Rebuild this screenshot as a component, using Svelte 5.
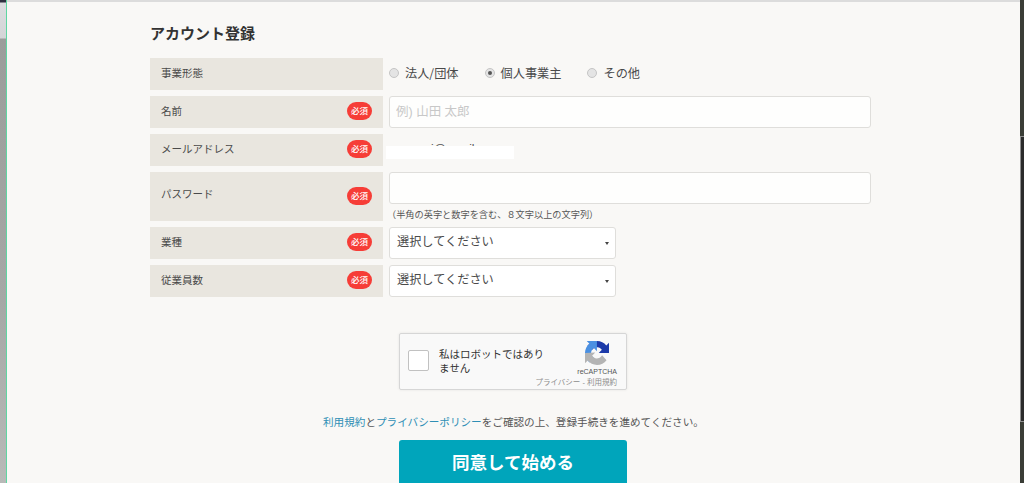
<script>
  const bizTypes = ['法人/団体', '個人事業主', 'その他'];
  let bizType = $state('個人事業主');
  let agreeRobot = $state(false);
</script>

<div class="frame">
  <div class="side"></div>
  <main class="page">
    <form class="form" onsubmit={(e) => e.preventDefault()}>
      <h1>アカウント登録</h1>

      <div class="row">
        <div class="label">事業形態</div>
        <div class="radios">
          {#each bizTypes as item}
            <button type="button" class="radio" onclick={() => (bizType = item)}>
              <span class="dot" class:on={bizType === item}></span>{item}
            </button>
          {/each}
        </div>
      </div>

      <div class="row">
        <div class="label">名前<span class="req">必須</span></div>
        <input class="text" type="text" placeholder="例) 山田 太郎" />
      </div>

      <div class="row">
        <div class="label">メールアドレス<span class="req">必須</span></div>
        <div class="email">
          <span class="email-text">i@gmail</span>
          <span class="mask"></span>
        </div>
      </div>

      <div class="row tall">
        <div class="label">パスワード<span class="req">必須</span></div>
        <div class="field">
          <input class="text" type="password" />
          <p class="hint">（半角の英字と数字を含む、８文字以上の文字列）</p>
        </div>
      </div>

      <div class="row">
        <div class="label">業種<span class="req">必須</span></div>
        <div class="select">選択してください<span class="caret"></span></div>
      </div>

      <div class="row">
        <div class="label">従業員数<span class="req">必須</span></div>
        <div class="select">選択してください<span class="caret"></span></div>
      </div>

      <div class="captcha">
        <button type="button" class="check" class:on={agreeRobot} aria-label="robot" onclick={() => (agreeRobot = !agreeRobot)}></button>
        <div class="captcha-text">私はロボットではありません</div>
        <div class="brand">
          <svg width="24" height="24" viewBox="0 0 64 64">
            <path d="M64 31.955l-.033-1.37V4.687l-7.16 7.16C50.948 4.674 42.033.093 32.05.093c-10.4 0-19.622 4.96-25.458 12.64l11.736 11.86a15.55 15.55 0 0 1 4.754-5.334c2.05-1.6 4.952-2.906 8.968-2.906.485 0 .86.057 1.135.163 4.976.393 9.288 3.14 11.828 7.124l-8.307 8.307L64 31.953" fill="#1c3aa9" />
            <path d="M31.862 0l-1.37.033H4.594l7.16 7.16C4.58 13.05 0 21.967 0 31.95c0 10.4 4.96 19.622 12.64 25.458L24.5 45.67a15.55 15.55 0 0 1-5.334-4.754c-1.6-2.05-2.906-4.952-2.906-8.968 0-.485.057-.86.163-1.135.393-4.976 3.14-9.288 7.124-11.828l8.307 8.307L31.86 0" fill="#4a90e2" />
            <path d="M0 31.957l.033 1.37v25.9l7.16-7.16c5.86 7.173 14.775 11.754 24.757 11.754 10.4 0 19.622-4.96 25.458-12.64L45.67 38.327a15.55 15.55 0 0 1-4.754 5.334c-2.05 1.6-4.952 2.906-8.968 2.906-.485 0-.86-.057-1.135-.163-4.976-.393-9.288-3.14-11.828-7.124l8.307-8.307L0 31.96" fill="#b4b4b4" />
          </svg>
          <div class="brand-name">reCAPTCHA</div>
          <div class="brand-links">プライバシー - 利用規約</div>
        </div>
      </div>

      <p class="terms"><a href="#terms">利用規約</a>と<a href="#privacy">プライバシーポリシー</a>をご確認の上、登録手続きを進めてください。</p>

      <button type="submit" class="submit">同意して始める</button>
    </form>
  </main>
  <div class="edge"><div class="thumb"></div></div>
</div>

<style>
  :global(body) {
    margin: 0;
    overflow: hidden;
    font-family: "Liberation Sans", "Noto Sans CJK JP", sans-serif;
  }

  .frame {
    display: flex;
    height: 483px;
    overflow: hidden;
    background: #f9f8f6;
  }

  .side {
    width: 6px;
    flex: none;
    background: linear-gradient(#2f3040 0, #2f3040 2px, #dcdde0 3px, #d4d5d7 38px, #9b9d9b 39px, #a6a8a6 300px, #b8bab8 483px);
    border-right: 1px solid #5fd6a2;
  }

  .edge {
    width: 4px;
    flex: none;
    background: #3a3d36;
  }

  .thumb {
    box-sizing: border-box;
    height: 286px;
    margin-top: 136px;
    border: 1px solid #8f8f8f;
    border-width: 1px 0 1px 1px;
    background: #2b2b2b;
  }

  .page {
    flex: 1;
    border-top: 2px solid #dcdcdc;
    min-width: 0;
  }

  .form {
    width: 721px;
    margin-left: 143px;
    color: #444;
  }

  h1 {
    margin: 22px 0 14px;
    height: 20px;
    font-size: 15px;
    line-height: 20px;
    font-weight: 700;
    color: #333;
  }

  .row {
    display: flex;
    gap: 6px;
    height: 32px;
    margin-bottom: 6px;
  }

  .row.tall {
    height: 49px;
  }

  .label {
    width: 233px;
    flex: none;
    box-sizing: border-box;
    display: flex;
    align-items: flex-start;
    justify-content: space-between;
    padding: 7px 11px 0;
    background: #e9e6df;
    font-size: 10.5px;
    line-height: 16px;
    color: #4a4a4a;
  }

  .row.tall .label {
    padding-top: 14px;
  }

  .req {
    width: 25px;
    height: 18px;
    margin-top: -1px;
    border-radius: 9px;
    background: #f63d37;
    color: #fff;
    font-size: 8.5px;
    font-weight: 500;
    line-height: 18px;
    text-align: center;
  }

  .row.tall .req {
    margin-top: 1px;
  }

  .radios {
    display: flex;
    align-items: center;
    gap: 26px;
    height: 29px;
  }

  .radio {
    display: flex;
    align-items: center;
    gap: 6px;
    padding: 0;
    border: 0;
    background: none;
    font-family: "Noto Sans CJK JP", sans-serif;
    font-size: 12.2px;
    color: #4a4a4a;
  }

  .dot {
    position: relative;
    width: 8px;
    height: 8px;
    border: 1px solid #c5c5c5;
    border-radius: 50%;
    background: #e4e4e4;
  }

  .dot.on::after {
    content: "";
    position: absolute;
    inset: 2px;
    border-radius: 50%;
    background: #555;
  }

  .text {
    box-sizing: border-box;
    display: block;
    width: 482px;
    height: 32px;
    padding: 0 6px;
    border: 1px solid #dfdedb;
    border-radius: 3px;
    background: #fefefd;
    font: inherit;
    font-size: 12.5px;
    outline: none;
  }

  .text::placeholder {
    color: #c8c8c8;
  }

  .field {
    display: flex;
    flex-direction: column;
  }

  .hint {
    margin: 5px 0 0 -2px;
    font-size: 9.2px;
    line-height: 12px;
    color: #555;
  }

  .email {
    position: relative;
    width: 482px;
    font-size: 12px;
  }

  .email-text {
    position: absolute;
    left: 42px;
    top: 8px;
    color: #555;
  }

  .mask {
    position: absolute;
    left: -3px;
    top: 12px;
    width: 128px;
    height: 13px;
    background: #fff;
  }

  .select {
    box-sizing: border-box;
    position: relative;
    width: 227px;
    height: 32px;
    padding: 0 7px;
    border: 1px solid #dfdedb;
    border-radius: 3px;
    background: #fff;
    font-size: 12.2px;
    line-height: 29px;
    color: #4a4a4a;
  }

  .caret {
    position: absolute;
    right: 6px;
    top: 14px;
    border: 2px solid transparent;
    border-top: 3px solid #444;
    border-bottom: 0;
  }

  .captcha {
    box-sizing: border-box;
    position: relative;
    display: flex;
    align-items: flex-start;
    width: 228px;
    height: 57px;
    margin: 36px 0 0 249px;
    padding: 16px 0 0 8px;
    border: 1px solid #d6d6d6;
    border-radius: 2px;
    background: #f9f9f9;
    box-shadow: 0 0 3px rgba(0, 0, 0, 0.08);
  }

  .check {
    width: 21px;
    height: 21px;
    flex: none;
    padding: 0;
    border: 1px solid #c1c1c1;
    border-radius: 2px;
    background: #fff;
  }

  .captcha-text {
    width: 112px;
    margin-left: 10px;
    margin-top: -2px;
    font-size: 10.5px;
    line-height: 13.5px;
    color: #333;
  }

  .brand {
    position: absolute;
    right: 9px;
    top: 7px;
    display: flex;
    flex-direction: column;
    align-items: flex-end;
  }

  .brand svg {
    margin-right: 8px;
  }

  .brand-name {
    margin-top: 2px;
    font-size: 7px;
    line-height: 10px;
    color: #555;
  }

  .brand-links {
    margin-top: 1px;
    font-size: 7.5px;
    line-height: 10px;
    color: #8d8d8d;
    white-space: nowrap;
  }

  .terms {
    margin: 25px 0 0;
    padding-left: 173px;
    font-size: 10.6px;
    line-height: 14px;
    color: #555;
    white-space: nowrap;
  }

  .terms a {
    color: #2f8fb5;
    text-decoration: none;
  }

  .submit {
    display: block;
    width: 228px;
    height: 60px;
    margin: 11px 0 0 249px;
    padding: 0 0 17px;
    border: 0;
    border-radius: 3px;
    background: #00a5bb;
    color: #fff;
    font: inherit;
    font-size: 17.5px;
    font-weight: 700;
  }
</style>
